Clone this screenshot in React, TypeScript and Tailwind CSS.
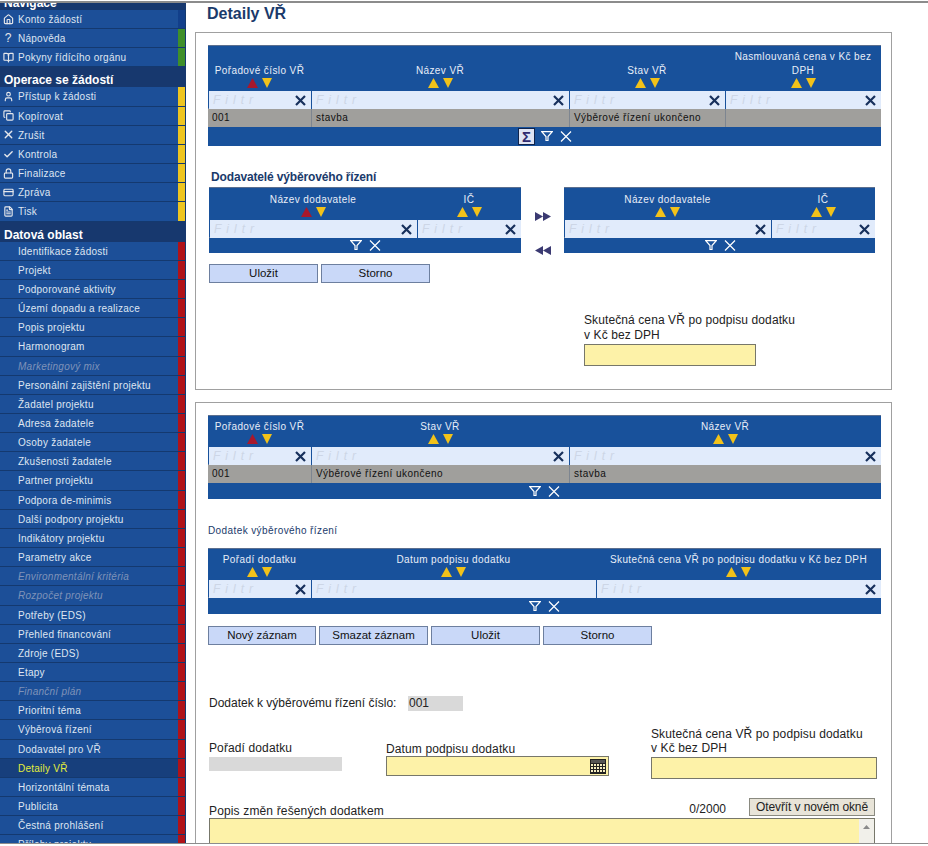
import { BookOpen, Check, Copy, CreditCard, FileText, Home, Lock, User, X } from "lucide-react";
import type { ReactNode } from "react";

type MenuItem = { label: string; icon?: ReactNode; muted?: boolean; active?: boolean };

const iconClass = "w-[11px] h-[11px] text-gray-200";

const NAV: MenuItem[] = [
  { label: "Konto žádostí", icon: <Home className={iconClass} strokeWidth={2.5} /> },
  { label: "Nápověda", icon: <span className="text-[12px] leading-none text-gray-200">?</span> },
  { label: "Pokyny řídícího orgánu", icon: <BookOpen className={iconClass} strokeWidth={2.5} /> },
];

const OPERATIONS: MenuItem[] = [
  { label: "Přístup k žádosti", icon: <User className={iconClass} strokeWidth={2.5} /> },
  { label: "Kopírovat", icon: <Copy className={iconClass} strokeWidth={2.5} /> },
  { label: "Zrušit", icon: <X className="h-[13px] w-[13px] text-gray-200" strokeWidth={2.5} /> },
  { label: "Kontrola", icon: <Check className={iconClass} strokeWidth={3} /> },
  { label: "Finalizace", icon: <Lock className={iconClass} strokeWidth={2.5} /> },
  { label: "Zpráva", icon: <CreditCard className={iconClass} strokeWidth={2.5} /> },
  { label: "Tisk", icon: <FileText className={iconClass} strokeWidth={2.5} /> },
];

const DATA: MenuItem[] = [
  { label: "Identifikace žádosti" },
  { label: "Projekt" },
  { label: "Podporované aktivity" },
  { label: "Území dopadu a realizace" },
  { label: "Popis projektu" },
  { label: "Harmonogram" },
  { label: "Marketingový mix", muted: true },
  { label: "Personální zajištění projektu" },
  { label: "Žadatel projektu" },
  { label: "Adresa žadatele" },
  { label: "Osoby žadatele" },
  { label: "Zkušenosti žadatele" },
  { label: "Partner projektu" },
  { label: "Podpora de-minimis" },
  { label: "Další podpory projektu" },
  { label: "Indikátory projektu" },
  { label: "Parametry akce" },
  { label: "Environmentální kritéria", muted: true },
  { label: "Rozpočet projektu", muted: true },
  { label: "Potřeby (EDS)" },
  { label: "Přehled financování" },
  { label: "Zdroje (EDS)" },
  { label: "Etapy" },
  { label: "Finanční plán", muted: true },
  { label: "Prioritní téma" },
  { label: "Výběrová řízení" },
  { label: "Dodavatel pro VŘ" },
  { label: "Detaily VŘ", active: true },
  { label: "Horizontální témata" },
  { label: "Publicita" },
  { label: "Čestná prohlášení" },
  { label: "Přílohy projektu" },
];

function MenuRow({ item, strip }: { item: MenuItem; strip: string }) {
  return (
    <div className={`flex h-[19.16px] shrink-0 border-b border-[#14396f] ${item.active ? "bg-[#173f7c]" : "bg-[#1c4f98]"}`}>
      <div className="w-[18px] shrink-0 flex items-center justify-center pl-[1px] pr-[3px]">{item.icon}</div>
      <div
        className={`flex-1 text-[10px] leading-[19px] tracking-[0.25px] whitespace-nowrap ${
          item.active ? "text-[#e4ee3a]" : item.muted ? "text-[#7f93b8] italic" : "text-[#dfe6f2]"
        }`}
      >
        {item.label}
      </div>
      <div className={`w-[7px] shrink-0 ${strip}`} />
      <div className="w-px shrink-0 bg-[#14396f]" />
    </div>
  );
}

function MenuHeader({ label, className = "" }: { label: string; className?: string }) {
  return (
    <div className={`h-[20px] shrink-0 bg-[#17386e] pl-1 text-[12px] font-bold leading-[26px] text-white ${className}`}>{label}</div>
  );
}

function Sort({ active }: { active?: boolean }) {
  return (
    <div className="flex justify-center gap-[4px] h-[10px]">
      <svg width="11" height="10" viewBox="0 0 11 10">
        <polygon points="5.5,0 11,10 0,10" fill={active ? "#a8182c" : "#f2c21a"} />
      </svg>
      <svg width="10" height="10" viewBox="0 0 10 10">
        <polygon points="0,0 10,0 5,10" fill="#f2c21a" />
      </svg>
    </div>
  );
}

function FilterCell({ clear = true }: { clear?: boolean }) {
  return (
    <div className="flex h-full items-center justify-between bg-[#e1ebfb] pl-1 pr-[5px]">
      <span className="text-[12px] italic tracking-[5px] text-[#cdd6e6]">Filtr</span>
      {clear && (
        <svg width="11" height="11" viewBox="0 0 11 11" className="shrink-0">
          <path d="M1 1 L10 10 M10 1 L1 10" stroke="#17305c" strokeWidth="2.2" />
        </svg>
      )}
    </div>
  );
}

type Col = { title: string[]; width: number; active?: boolean; clear?: boolean };

function GridTable({
  cols,
  rows,
  headerH,
  footerH,
  sigma,
  footerPad,
}: {
  cols: Col[];
  rows?: string[];
  headerH: number;
  footerH: number;
  sigma?: boolean;
  footerPad: number;
}) {
  const template = cols.map((c) => `${c.width}px`).join(" ");
  return (
    <div className="border-t border-[#5b6f8f] bg-[#18519b] font-['Liberation_Sans',sans-serif]">
      <div className="grid" style={{ gridTemplateColumns: template, height: headerH }}>
        {cols.map((c, i) => (
          <div key={i} className="flex flex-col justify-end pb-[3px] text-center text-[10px] leading-[14px] tracking-[0.4px] text-[#e8eef8] whitespace-nowrap">
            {c.title.map((t) => (
              <div key={t}>{t}</div>
            ))}
            <Sort active={c.active} />
          </div>
        ))}
      </div>
      <div className="grid h-[18px] gap-0 border-b border-[#5f7696]" style={{ gridTemplateColumns: template }}>
        {cols.map((c, i) => (
          <div key={i} className={i > 0 ? "border-l border-[#18519b]" : "pl-px"}>
            <FilterCell clear={c.clear !== false} />
          </div>
        ))}
      </div>
      {rows && (
        <div className="grid h-[18px]" style={{ gridTemplateColumns: template }}>
          {rows.map((r, i) => (
            <div key={i} className={`bg-[#a09f9c] pl-1 text-[10px] leading-[18px] tracking-[0.45px] text-[#111] whitespace-nowrap ${i > 0 ? "border-l border-[#7d8590]" : ""}`}>
              {r}
            </div>
          ))}
        </div>
      )}
      <div className="flex items-center gap-[7px]" style={{ height: footerH, paddingLeft: footerPad }}>
        {sigma && (
          <div className="mr-[-1px] flex h-[17px] w-[17px] items-center justify-center border border-[#10244c] bg-[#dfe4f4] text-[15px] font-bold leading-none text-[#2f2a70]">
            Σ
          </div>
        )}
        <svg width="12" height="11" viewBox="0 0 12 11">
          <path d="M0.8 0.7 H11.2 L7 5.5 V9.5 H5 V5.5 Z" fill="none" stroke="#fff" strokeWidth="1.2" />
        </svg>
        <svg width="12" height="11" viewBox="0 0 12 11">
          <path d="M1 0.5 L11 10.5 M11 0.5 L1 10.5" stroke="#fff" strokeWidth="1.2" />
        </svg>
      </div>
    </div>
  );
}

function Btn({ label, width }: { label: string; width: number }) {
  return (
    <button
      className="h-[19px] border border-[#6d7f9f] bg-[#c9d8f8] text-[11.5px] leading-none text-[#111]"
      style={{ width }}
    >
      {label}
    </button>
  );
}

function Arrows({ dir }: { dir: "r" | "l" }) {
  return (
    <svg width="16" height="9" viewBox="0 0 16 9">
      {dir === "r" ? (
        <path d="M0 0 L8 4.5 L0 9 Z M8 0 L16 4.5 L8 9 Z" fill="#3b3a72" />
      ) : (
        <path d="M16 0 L8 4.5 L16 9 Z M8 0 L0 4.5 L8 9 Z" fill="#3b3a72" />
      )}
    </svg>
  );
}

function CalendarIcon() {
  return (
    <svg width="16" height="15" viewBox="0 0 16 15">
      <rect x="0" y="0" width="16" height="15" fill="#222" />
      <rect x="1" y="1" width="14" height="3" fill="#555" />
      {[1, 4, 7, 10, 13].map((x) =>
        [5, 8, 11].map((y) => <rect key={`${x}-${y}`} x={x} y={y} width="2" height="2" fill="#f5edc0" />)
      )}
    </svg>
  );
}

export default function App() {
  return (
    <div className="flex h-[846px] w-[928px] flex-col overflow-hidden bg-white font-['Liberation_Sans',sans-serif]">
      <div className="h-[3px] shrink-0 border-b-2 border-[#8c8c8c] bg-white" />
      <div className="flex min-h-0 flex-1">
        {/* Menu */}
        <aside className="flex w-[186px] shrink-0 flex-col overflow-hidden">
          <MenuHeader label="Navigace" className="mt-[-13px]" />
          {NAV.map((m, i) => (
            <MenuRow key={m.label} item={m} strip={i === 0 ? "bg-[#123f8a]" : "bg-[#3f8f2a]"} />
          ))}
          <MenuHeader label="Operace se žádostí" />
          {OPERATIONS.map((m) => (
            <MenuRow key={m.label} item={m} strip="bg-[#eec520]" />
          ))}
          <MenuHeader label="Datová oblast" />
          {DATA.map((m) => (
            <MenuRow key={m.label} item={m} strip="bg-[#b01218]" />
          ))}
        </aside>

        {/* Content */}
        <main className="min-w-0 flex-1 pl-[9px]">
          <h1 className="ml-[12px] h-[29px] pt-[2px] text-[16px] font-bold leading-[18px] text-[#1a3a6b]">Detaily VŘ</h1>

          <section className="h-[358px] w-[697px] border border-[#a0a0a0] pl-[12px] pt-[12px]">
            <div className="w-[673px]">
              <GridTable
                headerH={45}
                footerH={19}
                footerPad={310}
                sigma
                cols={[
                  { title: ["Pořadové číslo VŘ"], width: 103, active: true },
                  { title: ["Název VŘ"], width: 258 },
                  { title: ["Stav VŘ"], width: 156 },
                  { title: ["Nasmlouvaná cena v Kč bez", "DPH"], width: 156 },
                ]}
                rows={["001", "stavba", "Výběrové řízení ukončeno", ""]}
              />
            </div>
            <h2 className="ml-[3px] mt-[24px] h-[17px] text-[12px] font-bold leading-[14px] tracking-[-0.15px] text-[#1a3a6b]">Dodavatelé výběrového řízení</h2>
            <div className="ml-px flex items-stretch">
              <div className="w-[312px]">
                <GridTable
                  headerH={32}
                  footerH={15}
                  footerPad={141}
                  cols={[
                    { title: ["Název dodavatele"], width: 208, active: true },
                    { title: ["IČ"], width: 104 },
                  ]}
                />
              </div>
              <div className="flex w-[43px] flex-col items-center gap-[25px] pt-[25px] pl-[1px]">
                <Arrows dir="r" />
                <Arrows dir="l" />
              </div>
              <div className="w-[311px]">
                <GridTable
                  headerH={32}
                  footerH={15}
                  footerPad={141}
                  cols={[
                    { title: ["Název dodavatele"], width: 207 },
                    { title: ["IČ"], width: 104 },
                  ]}
                />
              </div>
            </div>
            <div className="ml-px mt-[9px] flex gap-[3px]">
              <Btn label="Uložit" width={109} />
              <Btn label="Storno" width={109} />
            </div>
            <div className="ml-[376px] mt-[30px] text-[12px] leading-[15px] tracking-[0.1px] text-[#222]">
              Skutečná cena VŘ po podpisu dodatku
              <br />v Kč bez DPH
            </div>
            <div className="ml-[376px] mt-[1px] h-[22px] w-[172px] border border-[#77776a] bg-[#fdf2a8]" />
          </section>

          <section className="mt-[12px] h-[460px] w-[697px] border border-[#a0a0a0] pl-[12px] pt-[12px]">
            <div className="w-[673px]">
              <GridTable
                headerH={31}
                footerH={16}
                footerPad={321}
                cols={[
                  { title: ["Pořadové číslo VŘ"], width: 103, active: true },
                  { title: ["Stav VŘ"], width: 258 },
                  { title: ["Název VŘ"], width: 312 },
                ]}
                rows={["001", "Výběrové řízení ukončeno", "stavba"]}
              />
            </div>
            <h3 className="mt-[25px] h-[24px] text-[10px] font-normal leading-[14px] tracking-[0.4px] text-[#1a3a6b]">Dodatek výběrového řízení</h3>
            <div className="w-[673px]">
              <GridTable
                headerH={31}
                footerH={16}
                footerPad={321}
                cols={[
                  { title: ["Pořadí dodatku"], width: 103 },
                  { title: ["Datum podpisu dodatku"], width: 285, clear: false },
                  { title: ["Skutečná cena VŘ po podpisu dodatku v Kč bez DPH"], width: 285 },
                ]}
              />
            </div>
            <div className="mt-[12px] flex gap-[3px]">
              <Btn label="Nový záznam" width={108} />
              <Btn label="Smazat záznam" width={109} />
              <Btn label="Uložit" width={109} />
              <Btn label="Storno" width={109} />
            </div>

            <div className="ml-px mt-[49px] flex items-center text-[12px] text-[#222]">
              <span className="w-[199px] whitespace-nowrap">Dodatek k výběrovému řízení číslo:</span>
              <span className="h-[15px] w-[55px] bg-[#d9d9d9] pl-px leading-[15px]">001</span>
            </div>

            <div className="ml-px mt-[15px] flex items-end text-[12px] tracking-[0.12px] text-[#222]">
              <div className="w-[177px]">
                <div className="leading-[15px]">Pořadí dodatku</div>
                <div className="mb-[8px] mt-[1px] h-[14px] w-[133px] bg-[#d9d9d9]" />
              </div>
              <div className="w-[265px]">
                <div className="mb-[-1px] leading-[15px]">Datum podpisu dodatku</div>
                <div className="mb-[3px] flex h-[20px] w-[223px] items-center justify-end border border-[#77776a] bg-[#fdf2a8] pr-[2px]">
                  <CalendarIcon />
                </div>
              </div>
              <div>
                <div className="mb-[2px] leading-[14px]">
                  Skutečná cena VŘ po podpisu dodatku
                  <br />v Kč bez DPH
                </div>
                <div className="h-[22px] w-[226px] border border-[#77776a] bg-[#fdf2a8]" />
              </div>
            </div>

            <div className="ml-px mt-[19px] flex h-[20px] w-[666px] items-end text-[12px] text-[#222]">
              <span className="flex-1 leading-[14px] tracking-[0.15px]">Popis změn řešených dodatkem</span>
              <span className="mb-[2px] mr-[23px] leading-[14px]">0/2000</span>
              <button className="h-[18px] w-[126px] self-start border border-[#8a8a80] bg-[#e8e4d8] text-[12px] leading-none tracking-[-0.1px] text-[#222]">
                Otevřít v novém okně
              </button>
            </div>
            <div className="ml-px flex h-[60px] w-[666px] border border-[#77776a] bg-[#fdf2a8]">
              <div className="ml-auto flex h-full w-[15px] justify-center bg-[#f1f0ea] pt-[6px]">
                <svg width="7" height="4" viewBox="0 0 7 4">
                  <polygon points="3.5,0 7,4 0,4" fill="#8a8a8a" />
                </svg>
              </div>
            </div>
          </section>
        </main>
      </div>
      <div className="h-[3px] shrink-0 border-t border-[#8c8c8c] bg-white" />
    </div>
  );
}
